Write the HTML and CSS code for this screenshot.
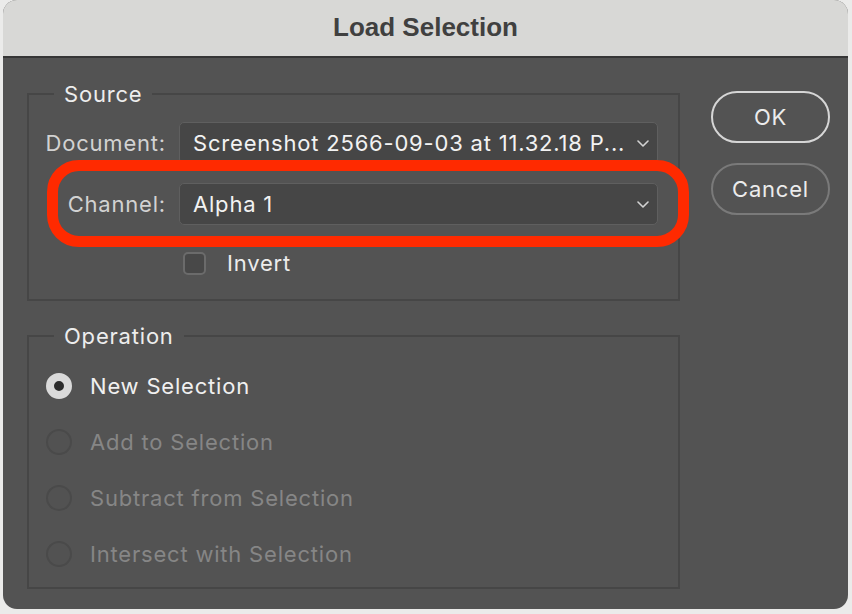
FILE: index.html
```html
<!DOCTYPE html>
<html lang="en">
<head>
    <meta charset="UTF-8">
    <meta name="viewport" content="width=device-width, initial-scale=1.0">
    <title>Load Selection</title>
    <link rel="stylesheet" href="styles.css">
</head>
<body>
    <div class="dialog">
        <div class="titlebar">Load Selection</div>
        <div class="content">
            <div class="groups">
                <fieldset class="group source">
                    <legend>Source</legend>
                    <div class="fields">
                        <span class="field-label">Document:</span>
                        <div class="select">
                            <span class="select-text">Screenshot 2566-09-03 at 11.32.18 P...</span>
                            <svg class="chevron" width="12" height="7" viewBox="0 0 12 7"><polyline points="1,1 6,6 11,1" fill="none" stroke="#d2d2d2" stroke-width="1.6" stroke-linecap="round" stroke-linejoin="round"/></svg>
                        </div>
                        <span class="field-label">Channel:</span>
                        <div class="select">
                            <span class="select-text">Alpha 1</span>
                            <svg class="chevron" width="12" height="7" viewBox="0 0 12 7"><polyline points="1,1 6,6 11,1" fill="none" stroke="#d2d2d2" stroke-width="1.6" stroke-linecap="round" stroke-linejoin="round"/></svg>
                        </div>
                    </div>
                    <div class="check-row">
                        <span class="checkbox"></span>
                        <span class="check-label">Invert</span>
                    </div>
                </fieldset>

                <fieldset class="group operation">
                    <legend>Operation</legend>
                    <div class="radio-row selected">
                        <span class="radio"></span>
                        <span class="radio-label">New Selection</span>
                    </div>
                    <div class="radio-row">
                        <span class="radio"></span>
                        <span class="radio-label">Add to Selection</span>
                    </div>
                    <div class="radio-row">
                        <span class="radio"></span>
                        <span class="radio-label">Subtract from Selection</span>
                    </div>
                    <div class="radio-row">
                        <span class="radio"></span>
                        <span class="radio-label">Intersect with Selection</span>
                    </div>
                </fieldset>
            </div>

            <div class="buttons">
                <button class="btn btn-ok" type="button">OK</button>
                <button class="btn" type="button">Cancel</button>
            </div>
        </div>

        <!-- red annotation around the channel row -->
        <div class="highlight"></div>
    </div>
</body>
</html>
```

FILE: styles.css
```css
html, body {
    margin: 0;
    height: 100%;
    background-color: #ebebea;
    font-family: Inter, "Open Sans", sans-serif;
    letter-spacing: 0.8px;
    overflow: hidden;
}
.dialog {
    position: relative;
    width: 845px;
    height: 609px;
    margin-left: 3px;
    background-color: #535353;
    border-radius: 14px;
    overflow: hidden;
}
.titlebar {
    height: 56px;
    line-height: 55px;
    background-color: #d8d8d6;
    border-bottom: 2px solid #363636;
    text-align: center;
    font-family: "Liberation Sans", Arial, sans-serif;
    font-weight: bold;
    font-size: 26px;
    letter-spacing: 0;
    color: #404040;
}
.content {
    display: flex;
    padding: 23px 0 0 24px;
}
.group {
    width: 653px;
    box-sizing: border-box;
    margin: 0;
    padding: 0;
    border: 2px solid #464646;
    min-inline-size: 0;
}
.group legend {
    margin-left: 25px;
    padding: 0 10px;
    font-size: 22px;
    line-height: 26px;
    color: #ededed;
}
.fields {
    display: grid;
    grid-template-columns: 137px 479px;
    grid-auto-rows: 42px;
    column-gap: 13px;
    row-gap: 19px;
    padding-top: 15px;
    align-items: center;
}
.field-label {
    text-align: right;
    font-size: 22px;
    color: #d2d2d2;
}
.select {
    height: 42px;
    box-sizing: border-box;
    display: flex;
    align-items: center;
    justify-content: space-between;
    padding: 0 8px 0 13px;
    background-color: #464646;
    border: 1px solid #5f5f5f;
    border-radius: 5px;
}
.select-text {
    font-size: 22px;
    color: #f2f2f2;
    white-space: nowrap;
}
.check-row {
    display: flex;
    align-items: center;
    gap: 21px;
    margin: 25px 0 0 154px;
    padding-bottom: 23px;
}
.checkbox {
    width: 23px;
    height: 23px;
    box-sizing: border-box;
    background-color: #484848;
    border: 2px solid #6b6b6b;
    border-radius: 5px;
}
.check-label {
    font-size: 22px;
    color: #ececec;
}
.operation {
    margin-top: 22px;
    padding: 9px 0 5px 17px;
}
.operation legend {
    margin-left: 8px;
}
.radio-row {
    display: flex;
    align-items: center;
    gap: 18px;
    height: 56px;
}
.radio {
    width: 26px;
    height: 26px;
    box-sizing: border-box;
    border-radius: 50%;
    border: 2px solid #4a4a4a;
    background-color: #525252;
}
.selected .radio {
    border: 8px solid #dadada;
    background-color: #2c2c2c;
}
.radio-label {
    font-size: 22px;
    color: #868686;
}
.selected .radio-label {
    color: #f0f0f0;
}
.buttons {
    display: flex;
    flex-direction: column;
    gap: 20px;
    margin: 10px 0 0 31px;
}
.btn {
    width: 119px;
    height: 52px;
    background: transparent;
    border: 2px solid #7a7a7a;
    border-radius: 26px;
    font-family: Inter, "Open Sans", sans-serif;
    font-size: 22px;
    letter-spacing: 0.8px;
    color: #ececec;
}
.btn-ok {
    border-color: #d6d6d6;
}
.highlight {
    position: absolute;
    left: 44px;
    top: 160px;
    width: 642px;
    height: 87px;
    box-sizing: border-box;
    border: 11px solid #ff2a00;
    border-radius: 32px;
}
```
